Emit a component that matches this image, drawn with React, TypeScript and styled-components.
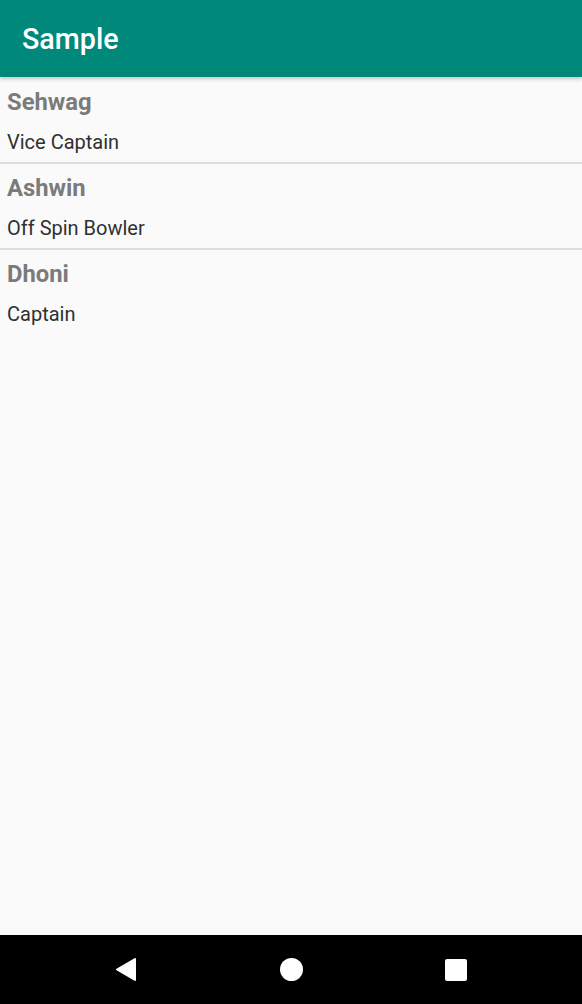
import React from 'react';
import styled, { createGlobalStyle } from 'styled-components';

const GlobalStyle = createGlobalStyle`
  html, body {
    margin: 0;
    padding: 0;
    background: #fafafa;
  }
  body {
    font-family: Roboto, 'Noto Sans', 'Liberation Sans', sans-serif;
  }
`;

const Screen = styled.div`
  display: flex;
  flex-direction: column;
  width: 582px;
  height: 1004px;
  background: #fafafa;
  overflow: hidden;
`;

const AppBar = styled.header`
  display: flex;
  align-items: center;
  height: 77px;
  padding: 0 22px;
  background: #00897b;
  box-shadow: 0 2px 4px rgba(0, 0, 0, 0.22);
  position: relative;
  z-index: 1;
  flex-shrink: 0;
`;

const Title = styled.h1`
  margin: 0;
  padding-top: 1px;
  font-size: 28.7px;
  font-weight: 500;
  color: #ffffff;
`;

const List = styled.ul`
  flex: 1;
  margin: 0;
  padding: 1px 0 0;
  list-style: none;
`;

const Item = styled.li<{ $divider: boolean }>`
  height: 72px;
  padding: 7px 7px 5px;
  border-bottom: ${(p) => (p.$divider ? '2px solid #dddddd' : 'none')};
`;

const Name = styled.div`
  font-size: 23.8px;
  line-height: 34px;
  font-weight: 700;
  color: #7b7b7b;
`;

const Role = styled.div`
  margin-top: 8px;
  font-size: 20px;
  line-height: 30px;
  color: #303030;
`;

const NavBar = styled.nav`
  display: flex;
  align-items: center;
  justify-content: center;
  gap: 125px;
  height: 69px;
  background: #000000;
  flex-shrink: 0;
`;

const NavButton = styled.div`
  display: flex;
  align-items: center;
  justify-content: center;
  width: 40px;
  height: 40px;
`;

const HomeDot = styled.div`
  width: 23px;
  height: 23px;
  border-radius: 50%;
  background: #ffffff;
`;

const RecentSquare = styled.div`
  width: 22px;
  height: 22px;
  border-radius: 2px;
  background: #ffffff;
`;

const players = [
  { name: 'Sehwag', role: 'Vice Captain' },
  { name: 'Ashwin', role: 'Off Spin Bowler' },
  { name: 'Dhoni', role: 'Captain' },
];

export default function App() {
  return (
    <Screen>
      <GlobalStyle />
      <AppBar>
        <Title>Sample</Title>
      </AppBar>
      <List>
        {players.map((p, i) => (
          <Item key={p.name} $divider={i < players.length - 1}>
            <Name>{p.name}</Name>
            <Role>{p.role}</Role>
          </Item>
        ))}
      </List>
      <NavBar>
        <NavButton>
          <svg width="22" height="25" viewBox="0 0 22 25">
            <path
              d="M2 12.5 L20 2 L20 23 Z"
              fill="#ffffff"
              stroke="#ffffff"
              strokeWidth="2"
              strokeLinejoin="round"
            />
          </svg>
        </NavButton>
        <NavButton>
          <HomeDot />
        </NavButton>
        <NavButton>
          <RecentSquare />
        </NavButton>
      </NavBar>
    </Screen>
  );
}
